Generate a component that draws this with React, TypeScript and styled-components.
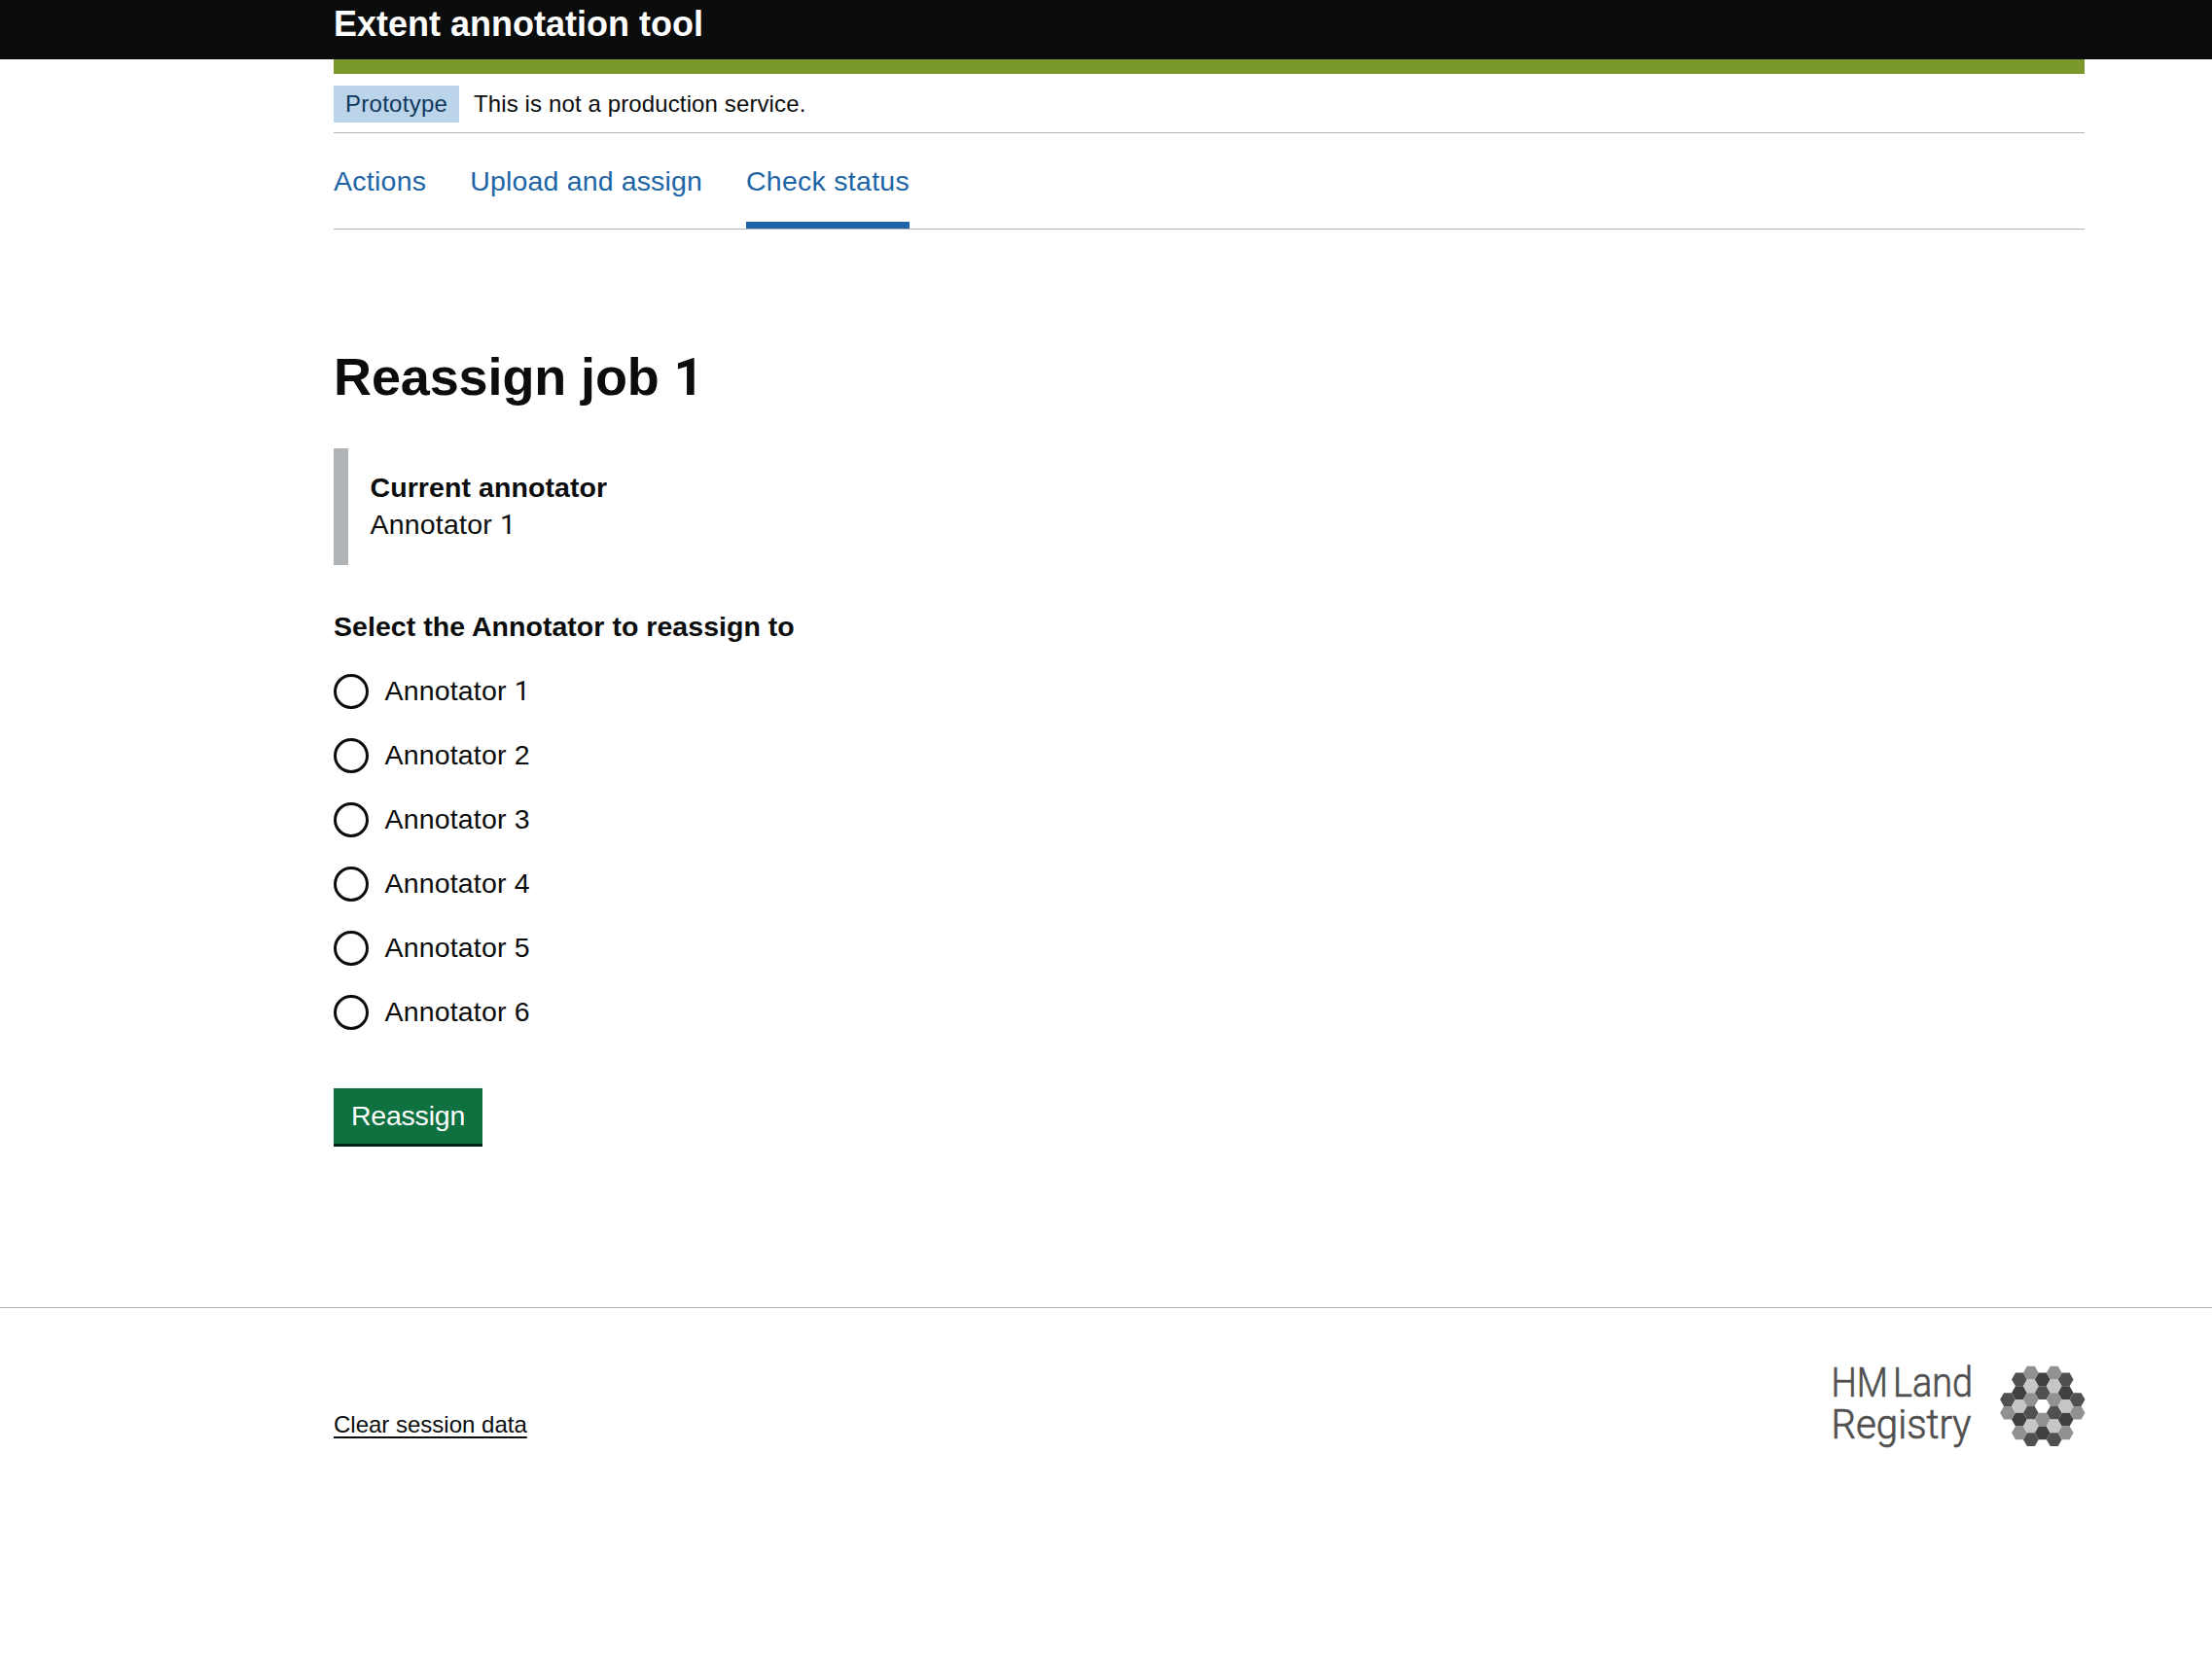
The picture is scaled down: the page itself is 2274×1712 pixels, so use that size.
import React from "react";
import styled, { createGlobalStyle } from "styled-components";

const GlobalStyle = createGlobalStyle`
  *, *::before, *::after { box-sizing: border-box; }
  body {
    margin: 0;
    background: #ffffff;
    color: #0b0c0c;
    font-family: "Liberation Sans", Arial, sans-serif;
    font-size: 28.5px;
    line-height: 37.5px;
  }
`;

const Container = styled.div`
  width: 1800px;
  margin-left: 343px;
`;

const Header = styled.header`
  height: 61px;
  background: #0b0c0c;
  color: #ffffff;
`;

const ServiceName = styled.div`
  font-size: 36px;
  font-weight: 700;
  line-height: 49px;
`;

const BrandBar = styled.div`
  height: 15px;
  background: #7b982b;
`;

const PhaseBanner = styled.div`
  display: flex;
  padding: 12px 0 10px;
  border-bottom: 1px solid #b1b4b6;
  font-size: 24px;
  line-height: 38px;
`;

const Tag = styled.strong`
  width: 129px;
  padding-left: 12px;
  background: #bbd4ea;
  color: #0f385c;
  font-weight: 400;
  letter-spacing: 0.27px;
`;

const PhaseText = styled.span`
  margin-left: 15px;
  letter-spacing: 0.12px;
`;

const Nav = styled.nav`
  display: flex;
  gap: 45px;
  height: 99px;
  border-bottom: 1px solid #b1b4b6;
`;

const NavLink = styled.a<{ $current?: boolean; $spacing: number }>`
  padding: 30px 0 23px;
  border-bottom: 7px solid ${(p) => (p.$current ? "#1d65a6" : "transparent")};
  color: #1d65a6;
  line-height: 38px;
  letter-spacing: ${(p) => p.$spacing}px;
  text-decoration: none;
  white-space: nowrap;
`;

const Main = styled.main`
  padding: 114px 0 165px;
`;

const Heading = styled.h1`
  margin: 0 0 36px;
  font-size: 54px;
  line-height: 75px;
  letter-spacing: -0.12px;
`;

const One = styled.span`
  font-family: Roboto, sans-serif;
`;

const Inset = styled.div`
  height: 120px;
  margin-bottom: 45px;
  padding: 22px 0 22px 22.5px;
  border-left: 15px solid #b1b4b6;
  letter-spacing: 0.2px;
`;

const InsetTitle = styled.div`
  font-weight: 700;
  letter-spacing: 0.08px;
`;

const Fieldset = styled.fieldset`
  margin: 0 0 45px;
  padding: 0;
  border: 0;
`;

const Legend = styled.legend`
  height: 52px;
  padding: 0;
  font-weight: 700;
  letter-spacing: 0.04px;
`;

const RadioRow = styled.label`
  display: flex;
  align-items: center;
  gap: 16.5px;
  height: 66px;
  letter-spacing: 0.17px;
`;

const Radio = styled.input`
  appearance: none;
  width: 36px;
  height: 36px;
  margin: 0;
  border: 3px solid #0b0c0c;
  border-radius: 50%;
`;

const Button = styled.button`
  display: block;
  width: 153px;
  height: 57px;
  padding: 1px 0 0;
  border: 0;
  background: #0f7040;
  box-shadow: 0 3px 0 #002413;
  color: #ffffff;
  font: inherit;
  letter-spacing: -0.2px;
`;

const Footer = styled.footer`
  margin-top: 3px;
  border-top: 1px solid #b1b4b6;
`;

const FooterRow = styled(Container)`
  display: flex;
  justify-content: space-between;
  align-items: flex-start;
  padding-top: 59px;
`;

const FooterLink = styled.a`
  margin-top: 42px;
  color: #0b0c0c;
  font-size: 24px;
  text-decoration: underline;
  text-decoration-thickness: 2px;
  text-underline-offset: 4px;
  text-decoration-skip-ink: none;
`;

const LogoSvg = styled.svg`
  display: block;
  overflow: visible;
  font-family: Roboto, sans-serif;
  font-weight: 300;
  font-size: 42.5px;
`;

const DARKEST = "#404040";
const DARK = "#505050";
const MID = "#919191";
const LIGHT = "#c6c6c6";
const WHITE = "#ffffff";

const HEX_PITCH = 11.93;
const HEX_HEIGHT = 13.72;

/* Each column lists its cells from top to bottom; top is in half-cell steps. */
const hexColumns = [
  { top: 4, cells: [DARK, MID] },
  { top: 1, cells: [DARK, DARKEST, LIGHT, DARKEST, MID] },
  { top: 0, cells: [MID, LIGHT, MID, DARK, LIGHT, DARK] },
  { top: 1, cells: [DARKEST, DARK, WHITE, MID, DARKEST] },
  { top: 0, cells: [MID, LIGHT, MID, DARK, LIGHT, DARK] },
  { top: 1, cells: [DARK, DARKEST, LIGHT, DARKEST, MID] },
  { top: 4, cells: [DARK, MID] },
];

function hexPoints(cx: number, cy: number) {
  const r = 7.9;
  const h = HEX_HEIGHT / 2;
  return [
    [cx - r, cy],
    [cx - r / 2, cy - h],
    [cx + r / 2, cy - h],
    [cx + r, cy],
    [cx + r / 2, cy + h],
    [cx - r / 2, cy + h],
  ]
    .map((p) => p.join(","))
    .join(" ");
}

function Logo() {
  return (
    <LogoSvg width="258" height="88" viewBox="0 0 258 88" role="img" aria-label="HM Land Registry">
      <g fill="#505050" stroke="#505050" strokeWidth="0.7">
        <text x="-2.5" y="32" textLength="58.5" lengthAdjust="spacingAndGlyphs">HM</text>
        <text x="61" y="32" textLength="82" lengthAdjust="spacingAndGlyphs">Land</text>
        <text x="-2.5" y="75" textLength="144" lengthAdjust="spacingAndGlyphs">Registry</text>
      </g>
      {hexColumns.map((col, c) =>
        col.cells.map((fill, i) => (
          <polygon
            key={`${c}-${i}`}
            points={hexPoints(179 + c * HEX_PITCH, 7.6 + (col.top / 2 + i) * HEX_HEIGHT)}
            fill={fill}
          />
        ))
      )}
    </LogoSvg>
  );
}

const annotators = [1, 2, 3, 4, 5, 6];

const Digit = ({ n }: { n: number }) => (n === 1 ? <One>1</One> : <>{n}</>);

export default function App() {
  return (
    <>
      <GlobalStyle />
      <Header>
        <Container>
          <ServiceName>Extent annotation tool</ServiceName>
        </Container>
      </Header>
      <Container>
        <BrandBar />
        <PhaseBanner>
          <Tag>Prototype</Tag>
          <PhaseText>This is not a production service.</PhaseText>
        </PhaseBanner>
        <Nav>
          <NavLink $spacing={0.27}>Actions</NavLink>
          <NavLink $spacing={0.15}>Upload and assign</NavLink>
          <NavLink $spacing={0.27} $current>Check status</NavLink>
        </Nav>
        <Main>
          <Heading>Reassign job <Digit n={1} /></Heading>
          <Inset>
            <InsetTitle>Current annotator</InsetTitle>
            <div>Annotator <Digit n={1} /></div>
          </Inset>
          <Fieldset>
            <Legend>Select the Annotator to reassign to</Legend>
            {annotators.map((n) => (
              <RadioRow key={n}>
                <Radio type="radio" name="annotator" value={n} />
                <span>Annotator <Digit n={n} /></span>
              </RadioRow>
            ))}
          </Fieldset>
          <Button type="button">Reassign</Button>
        </Main>
      </Container>
      <Footer>
        <FooterRow>
          <FooterLink>Clear session data</FooterLink>
          <Logo />
        </FooterRow>
      </Footer>
    </>
  );
}
